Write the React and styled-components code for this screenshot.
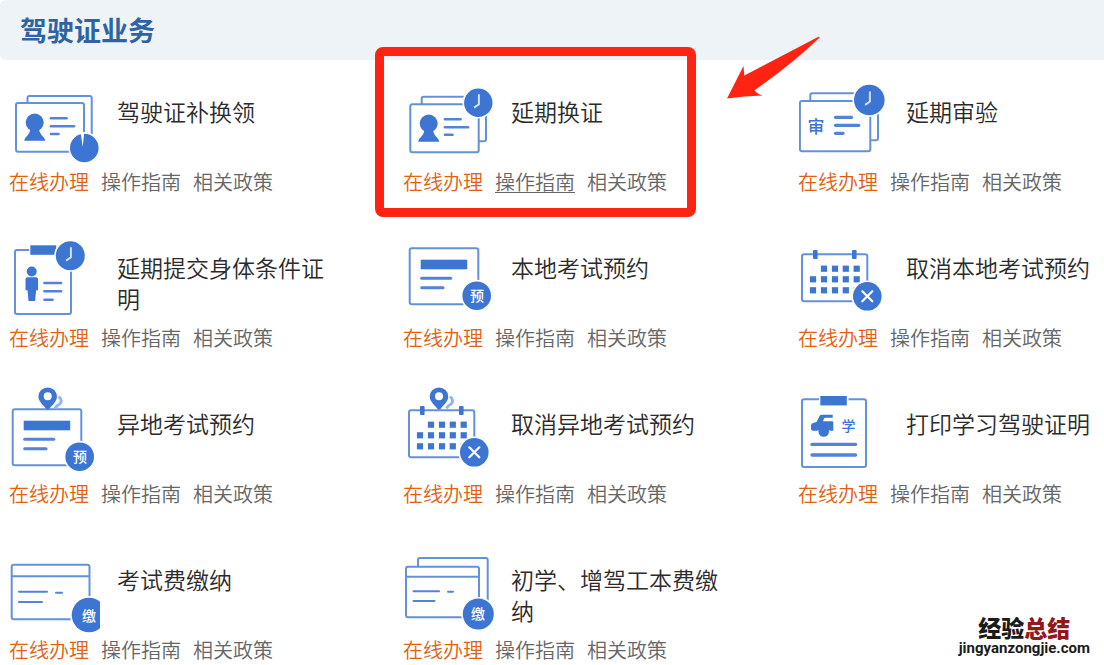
import React from "react";
import styled, { createGlobalStyle } from "styled-components";

const BLUE = "#3d75d3";
const LINE = "#6391dc";
const RED = "#ff2313";

const GlobalStyle = createGlobalStyle`
  body {
    margin: 0;
    background: #fff;
    font-family: "Noto Sans CJK SC", sans-serif;
  }
`;

const Page = styled.main`
  position: relative;
  overflow: hidden;
`;

const SectionHeader = styled.header`
  display: flex;
  align-items: center;
  height: 60px;
  padding-left: 20px;
  border-radius: 6px 0 0 6px;
  background: #edf3f7;
`;

const SectionTitle = styled.h1`
  margin: 0;
  font-size: 27px;
  line-height: 40px;
  font-weight: 700;
  color: #2f63a5;
`;

const ServiceGrid = styled.ul`
  display: grid;
  grid-template-columns: minmax(0, 394fr) minmax(0, 395fr) minmax(0, 315fr);
  row-gap: 19px;
  margin: 0;
  padding: 0;
  list-style: none;
`;

const ServiceCard = styled.li`
  position: relative;
  padding: 15px 0 0 10px;
`;

const ServiceTop = styled.div`
  display: flex;
  align-items: flex-start;
  gap: 17px;
  min-height: 92px;
`;

const IconSvg = styled.svg`
  flex: none;
  width: 90px;
  height: 92px;
  fill: ${BLUE};
  font-family: "Noto Sans CJK SC", sans-serif;
  font-weight: 500;
  text-anchor: middle;
`;

const ServiceName = styled.h2`
  margin: 0;
  padding-top: 21px;
  max-width: 215px;
  font-size: 23px;
  line-height: 31px;
  font-weight: 350;
  color: #2b2b2b;
`;

const LinkRow = styled.nav`
  display: flex;
  gap: 12px;
  height: 30px;
  margin-left: -1px;
`;

const ServiceLink = styled.a`
  font-size: 20px;
  line-height: 30px;
  font-weight: 350;
  white-space: nowrap;
  text-underline-offset: 2px;
  text-decoration: ${(p) => (p.$underlined ? "underline 1px" : "none")};
  color: ${(p) => (p.$primary ? "#e2600f" : "#666")};
`;

const Highlight = styled.div`
  position: absolute;
  top: -13px;
  left: -19px;
  box-sizing: border-box;
  width: 321px;
  height: 170px;
  border: 9px solid ${RED};
  border-radius: 8px;
  pointer-events: none;
`;

const Arrow = styled.svg`
  position: absolute;
  top: -24px;
  left: 332px;
  width: 96px;
  height: 64px;
  fill: ${RED};
  pointer-events: none;
`;

const Watermark = styled.aside`
  position: absolute;
  right: 14px;
  bottom: 8px;
  display: flex;
  flex-direction: column;
  align-items: center;
  color: #1b1b1b;
`;

const WatermarkName = styled.span`
  font-size: 23px;
  line-height: 24px;
  font-weight: 900;
`;

const WatermarkAccent = styled.span`
  color: #8f1a1c;
`;

const WatermarkSite = styled.span`
  font-family: Roboto, sans-serif;
  font-size: 15px;
  line-height: 18px;
  font-weight: 700;
`;

/* Icon parts */

const Outline = ({ d }) => (
  <path d={d} fill="none" stroke={LINE} strokeWidth="2" strokeLinejoin="round" />
);

const Card = ({ x, y, r, b }) => (
  <rect x={x} y={y} width={r - x} height={b - y} rx="2" fill="#fff" stroke={LINE} strokeWidth="2" />
);

const Lines = ({ rows, width = 2.6 }) =>
  rows.map(([x1, x2, y], i) => (
    <line key={i} x1={x1} x2={x2} y1={y} y2={y} stroke="#5283d6" strokeWidth={width} strokeLinecap="round" />
  ));

const Badge = ({ x, y, r = 14.3, children }) => (
  <>
    <circle cx={x} cy={y} r={r + 1.6} fill="#fff" />
    <circle cx={x} cy={y} r={r} />
    {children}
  </>
);

const Clock = ({ x, y, r }) => (
  <Badge x={x} y={y} r={r}>
    <path
      d={`M${x + 0.6} ${y - 8.5}v10l-4.8 3.4`}
      fill="none"
      stroke="#d3e1f8"
      strokeWidth="2"
    />
  </Badge>
);

const BadgeText = ({ x, y, children }) => (
  <text x={x} y={y + 5} fontSize="14" fill="#fff">{children}</text>
);

const Person = ({ y }) => (
  <g transform={`translate(0 ${y})`}>
    <circle cx="24.7" cy="0" r="9" />
    <path d="M20.5 6h8.4q.4 4 2.6 6.500q3.500 3 3.700 5.800h-21q.2-2.800 3.700-5.800q2.200-2.500 2.600-6.500z" />
  </g>
);

const Pin = ({ x }) => (
  <g transform={`translate(${x} 0)`}>
    <path d="M11 9.500q4.500 4 1 7.500q-3 1.500-4.500 4.500" fill="none" stroke="#94b4ea" strokeWidth="3" />
    <path
      fillRule="evenodd"
      d="M0 .4a9.300 9.300 0 0 1 9.300 9.300q0 4.300-6.300 10.300q-1.500 2.600-3 2.600t-3-2.600q-6.300-6-6.300-10.300a9.300 9.300 0 0 1 9.300-9.300zM0 5.200a4 4 0 1 0 0 8a4 4 0 1 0 0-8z"
    />
  </g>
);

const BookingForm = () => (
  <>
    <Card x={5.7} y={17.3} r={74.3} b={73.3} />
    <rect x="16.700" y="28.700" width="46.500" height="9.600" />
    <Lines rows={[[17.7, 46.7, 47.3], [17.7, 39, 56.7]]} width={3} />
    <Badge x={72.7} y={64.700}>
      <BadgeText x={72.9} y={64.7}>预</BadgeText>
    </Badge>
  </>
);

const CALENDAR_COLS = [14, 25, 36, 46.8, 57.700];
const CALENDAR_ROWS = [37.7, 48.3, 59.3];

const CancelCalendar = () => (
  <>
    <Card x={3} y={23.3} r={68.3} b={70.3} />
    {[16.3, 55.3].map((x) => (
      <rect key={x} x={x - 2.300} y="19" width="4.600" height="9" rx="1" />
    ))}
    {CALENDAR_ROWS.map((y, row) =>
      CALENDAR_COLS.map((x, col) =>
        row === 0 && col === 0 ? null : <rect key={`${x}-${y}`} x={x - 3.1} y={y - 3.1} width="6.200" height="6.200" />
      )
    )}
    <Badge x={68.3} y={65.3}>
      <path d="M63.300 60.300l10 10m0-10l-10 10" stroke="#fff" strokeWidth="2.200" strokeLinecap="round" />
    </Badge>
  </>
);

const ICONS = {
  replace: (
    <>
      <Outline d="M17.500 28v-5q0-2 2-2h60.200q2 0 2 2v37" />
      <Card x={6} y={28} r={74} b={76.7} />
      <Person y={47.5} />
      <Lines rows={[[41, 56.500, 43.3], [41, 64, 51.3], [41, 48.5, 59]]} />
      <Badge x={74.3} y={73}>
        <path d="M70.700 58l2 14l1.500-14z" fill="#fff" />
      </Badge>
    </>
  ),
  renew: (
    <>
      <Outline d="M17.700 29v-5.300q0-2 2-2h60.300q2 0 2 2v40.600q0 2-2 2h-5" />
      <Card x={6.3} y={29.3} r={74.7} b={77.3} />
      <Person y={48.5} />
      <Lines rows={[[41, 56.5, 44.3], [41, 64, 52.2], [41, 48.5, 59.8]]} />
      <Clock x={74.3} y={27.7} r={14.2} />
    </>
  ),
  review: (
    <>
      <Outline d="M11.300 26v-5.700q0-2 2-2h63.700q2 0 2 2v43q0 2-2 2h-5.500" />
      <Card x={0.9} y={26} r={71.3} b={76.3} />
      <text x="17" y="58" fontSize="17">审</text>
      <Lines rows={[[36.5, 52.500, 42.3], [36.5, 59.7, 50.3], [36.5, 44, 58.3]]} width={3.2} />
      <Clock x={70.3} y={25} r={15.3} />
    </>
  ),
  health: (
    <>
      <Card x={5} y={19} r={61} b={83} />
      <rect x="19" y="15" width="28" height="9.500" fill="#fff" />
      <rect x="20.300" y="14.300" width="26" height="9.500" />
      <circle cx="21.700" cy="40.500" r="5" />
      <path d="M17.500 46.300h8.600q2 0 2 2v11h-2l-1 10.700h-6.600l-1-10.700h-2v-11q0-2 2-2z" />
      <Lines rows={[[34.500, 51, 52], [34.5, 51, 60.3], [34.5, 42.5, 68.7]]} />
      <Clock x={60.3} y={24.7} r={14.500} />
    </>
  ),
  book: <BookingForm />,
  cancel: <CancelCalendar />,
  bookAway: (
    <>
      <g transform="translate(-3 5)"><BookingForm /></g>
      <Pin x={37.7} />
    </>
  ),
  cancelAway: (
    <>
      <g transform="translate(2 0)"><CancelCalendar /></g>
      <Pin x={35} />
    </>
  ),
  print: (
    <>
      <Card x={3} y={12.3} r={67} b={80} />
      <rect x="20" y="9" width="29.500" height="10" fill="#fff" />
      <rect x="21.300" y="9" width="26.500" height="9.400" />
      <path d="M12 38.500q0-2 2-2.500l3.500-1l3-6q.8-1.300 2.500-1.300h10.700v3h-7.200q-1.200 0-1.600 1l-.9 2.600h9q1.300 0 1.300 1.300v8.100h-20.300q-2 0-2-2z" />
      <circle cx="24.700" cy="44.500" r="5.300" />
      <path d="M18.600 43.700h.8M30 43.700h.8" stroke="#fff" strokeWidth="1" />
      <text x="49.500" y="44" fontSize="14">学</text>
      <Lines rows={[[13, 56.5, 57.4], [13, 56.5, 68]]} width={3.4} />
    </>
  ),
  examFee: (
    <>
      <Card x={1.7} y={21.7} r={79.5} b={76.3} />
      <Outline d="M2 33.300h77" />
      <Lines rows={[[9, 37, 48.7], [46, 52, 49.7], [9, 32, 59]]} width={2} />
      <Badge x={79} y={72} r={17.3}>
        <BadgeText x={79} y={72.5}>缴</BadgeText>
      </Badge>
    </>
  ),
  licenceFee: (
    <>
      <Outline d="M14 24v-7q0-2 2-2h65.700q2 0 2 2v43" />
      <Card x={2} y={23.7} r={75} b={74.3} />
      <Outline d="M2 33.700h73" />
      <Lines rows={[[9.500, 35, 48.3], [44, 49, 48.8], [9.5, 30.5, 58]]} width={2} />
      <Badge x={74.3} y={71} r={15.500}>
        <BadgeText x={74} y={71}>缴</BadgeText>
      </Badge>
    </>
  ),
};

const SERVICES = [
  { icon: "replace", name: "驾驶证补换领" },
  { icon: "renew", name: "延期换证", highlighted: true },
  { icon: "review", name: "延期审验" },
  { icon: "health", name: "延期提交身体条件证明" },
  { icon: "book", name: "本地考试预约" },
  { icon: "cancel", name: "取消本地考试预约" },
  { icon: "bookAway", name: "异地考试预约" },
  { icon: "cancelAway", name: "取消异地考试预约" },
  { icon: "print", name: "打印学习驾驶证明" },
  { icon: "examFee", name: "考试费缴纳" },
  { icon: "licenceFee", name: "初学、增驾工本费缴纳" },
];

function Service({ icon, name, highlighted }) {
  return (
    <ServiceCard>
      <ServiceTop>
        <IconSvg viewBox="0 0 90 92" aria-hidden="true">{ICONS[icon]}</IconSvg>
        <ServiceName>{name}</ServiceName>
      </ServiceTop>
      <LinkRow aria-label={name}>
        <ServiceLink href="#apply" $primary>在线办理</ServiceLink>
        <ServiceLink href="#guide" $underlined={highlighted}>操作指南</ServiceLink>
        <ServiceLink href="#policy">相关政策</ServiceLink>
      </LinkRow>
      {highlighted && (
        <>
          <Highlight />
          <Arrow viewBox="0 0 96 64" aria-hidden="true">
            <path d="M1 62.500L17.500 30l.8 9.500L92.500.8l1.500.4Q66 28 28.500 54.300q3.500 4.500 8 5.200Q18 60 1 62.500z" />
          </Arrow>
        </>
      )}
    </ServiceCard>
  );
}

export default function App() {
  return (
    <>
      <GlobalStyle />
      <Page>
        <SectionHeader>
          <SectionTitle>驾驶证业务</SectionTitle>
        </SectionHeader>
        <ServiceGrid>
          {SERVICES.map((service) => (
            <Service key={service.name} {...service} />
          ))}
        </ServiceGrid>
        <Watermark>
          <WatermarkName>
            经验<WatermarkAccent>总结</WatermarkAccent>
          </WatermarkName>
          <WatermarkSite>jingyanzongjie.com</WatermarkSite>
        </Watermark>
      </Page>
    </>
  );
}
